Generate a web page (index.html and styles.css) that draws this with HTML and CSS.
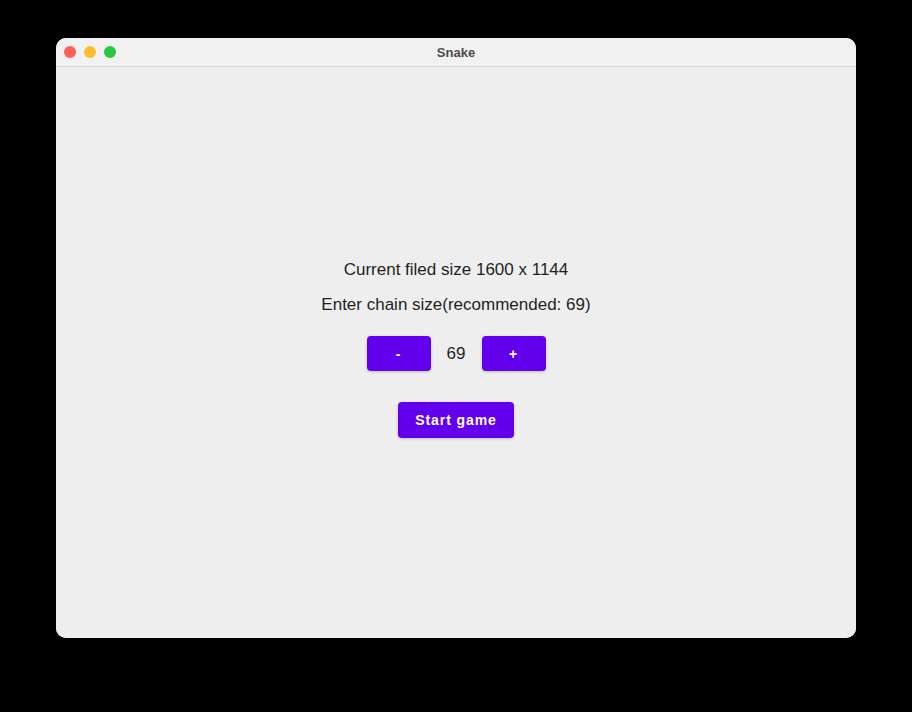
FILE: index.html
```html
<!DOCTYPE html>
<html>
<head>
<meta charset="utf-8">
<link rel="stylesheet" href="styles.css">
</head>
<body>
<div class="window">
  <div class="titlebar">
    <div class="lights">
      <span class="light red"></span>
      <span class="light yellow"></span>
      <span class="light green"></span>
    </div>
    <div class="title">Snake</div>
  </div>
  <div class="content">
    <p class="line first">Current filed size 1600 x 1144</p>
    <p class="line second">Enter chain size(recommended: 69)</p>
    <div class="stepper">
      <button class="btn small">-</button>
      <span class="value">69</span>
      <button class="btn small">+</button>
    </div>
    <button class="btn start">Start game</button>
  </div>
</div>
</body>
</html>
```
FILE: styles.css
```css
html, body {
  margin: 0;
  padding: 0;
  background: #000;
}
body {
  width: 912px;
  height: 712px;
  padding: 38px 0 0 56px;
  box-sizing: border-box;
  font-family: "Liberation Sans", Arial, sans-serif;
}
.window {
  width: 800px;
  height: 600px;
  background: #ececec;
  border-radius: 10px;
  overflow: hidden;
  display: flex;
  flex-direction: column;
}
.titlebar {
  height: 28px;
  flex: none;
  background: #f1f1f1;
  border-bottom: 1px solid #d6d6d6;
  position: relative;
  display: flex;
  align-items: center;
  justify-content: center;
}
.lights {
  position: absolute;
  left: 8px;
  top: 8px;
  display: flex;
  gap: 8px;
}
.light {
  width: 12px;
  height: 12px;
  border-radius: 50%;
  display: block;
}
.red { background: #fe5f57; }
.yellow { background: #febc2e; }
.green { background: #28c840; }
.title {
  font-size: 13px;
  font-weight: bold;
  color: #4b4b4b;
}
.content {
  flex: 1;
  display: flex;
  flex-direction: column;
  align-items: center;
  justify-content: center;
  padding-bottom: 7px;
  background: #eeeeee;
}
.line {
  margin: 0;
  font-size: 17px;
  line-height: 20px;
  color: #1f1f1f;
}
.second {
  margin-top: 15px;
}
.stepper {
  margin-top: 21px;
  display: flex;
  align-items: center;
}
.value {
  width: 51px;
  text-align: center;
  font-size: 17px;
  color: #1f1f1f;
}
.btn {
  border: none;
  background: #6200ee;
  color: #fff;
  font-family: "Liberation Sans", Arial, sans-serif;
  font-weight: bold;
  font-size: 14px;
  letter-spacing: 0.9px;
  border-radius: 4px;
  box-shadow: 0 1px 3px rgba(0,0,0,0.2);
  padding: 0;
}
.small {
  width: 64px;
  height: 35px;
}
.start {
  margin-top: 31px;
  width: 116px;
  height: 36px;
}
```
